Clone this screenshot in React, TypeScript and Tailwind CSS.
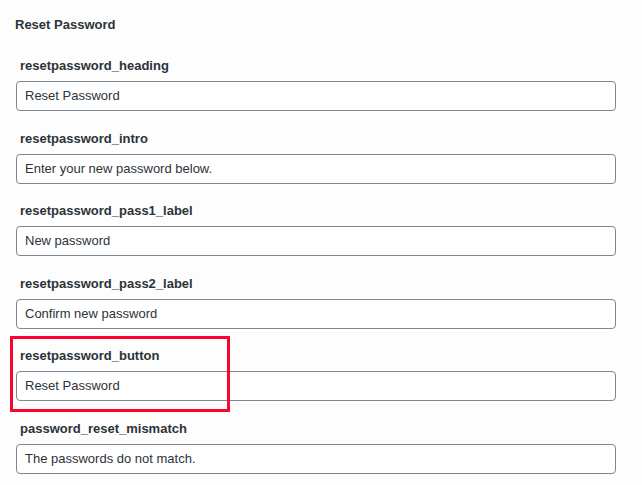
const fields = [
  { key: "resetpassword_heading", value: "Reset Password" },
  { key: "resetpassword_intro", value: "Enter your new password below." },
  { key: "resetpassword_pass1_label", value: "New password" },
  { key: "resetpassword_pass2_label", value: "Confirm new password" },
  { key: "resetpassword_button", value: "Reset Password" },
  { key: "password_reset_mismatch", value: "The passwords do not match." },
];

export default function App() {
  return (
    <div className="relative w-[642px] h-[485px] overflow-hidden bg-[#fcfdfc] font-['Liberation_Sans',Arial,sans-serif] text-[#2c3338]">
      <div className="pt-[17px] pl-[15px] text-[13px] leading-[16px] font-bold">Reset Password</div>
      <div className="mt-[25px] pl-[16px] w-[616px]">
        {fields.map((f) => (
          <div key={f.key} className="mb-[19.5px]">
            <div className="pl-[4px] text-[13px] leading-[16px] font-bold">{f.key}</div>
            <div className="mt-[7px] h-[30px] rounded-[4px] border border-[#7b8793] bg-white pl-[8px] flex items-center text-[13px]">
              {f.value}
            </div>
          </div>
        ))}
      </div>
      <div className="absolute left-[10px] top-[336px] w-[220px] h-[76px] border-[3px] border-[#fa0530] pointer-events-none" />
    </div>
  );
}
